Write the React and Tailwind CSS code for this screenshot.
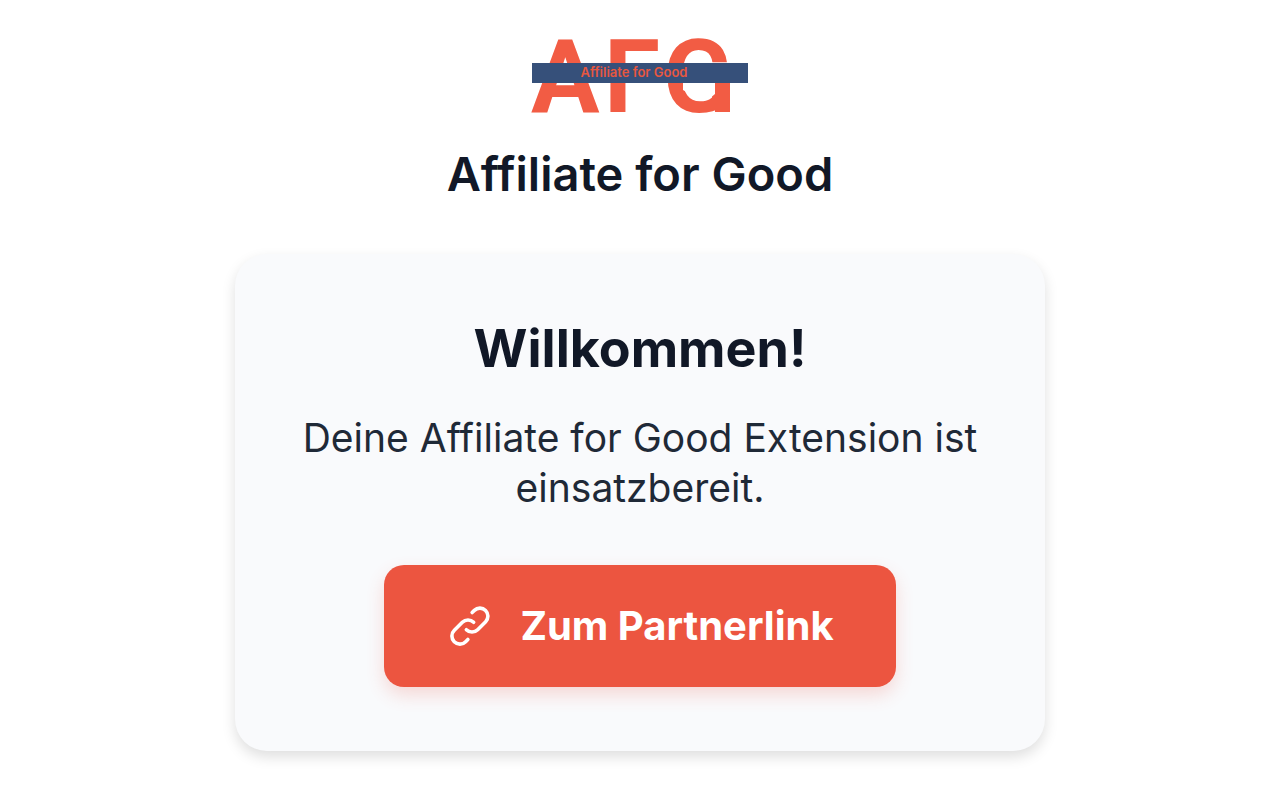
import React from "react";

function Logo() {
  return (
    <svg viewBox="0 0 218 104" className="h-[104px] w-[218px] overflow-visible" role="img" aria-label="AFG">
      <g fill="#f25c44" fontFamily="Roboto, sans-serif" fontWeight="700" fontSize="102">
        <text x="0 73 132" y="76">AFG</text>
      </g>
      <path d="M152 44H184V58L178 63H168L152 54Z" fill="#ffffff" />
      <rect x="184" y="46" width="15" height="30" fill="#f25c44" />
      <rect x="1" y="27" width="216" height="20" fill="#36507a" />
      <text x="103" y="41" fontSize="13" textAnchor="middle" fill="#e8573f" fontFamily="Inter, sans-serif" fontWeight="600">
        Affiliate for Good
      </text>
    </svg>
  );
}

function LinkIcon() {
  return (
    <svg viewBox="0 0 24 24" className="size-12" fill="none" stroke="currentColor" strokeWidth="1.8" strokeLinecap="round" strokeLinejoin="round" aria-hidden="true">
      <path d="M13.828 10.172a4 4 0 0 0-5.656 0l-4 4a4 4 0 1 0 5.656 5.656l1.102-1.101m-.758-4.899a4 4 0 0 0 5.656 0l4-4a4 4 0 0 0-5.656-5.656l-1.1 1.1" />
    </svg>
  );
}

export default function App() {
  return (
    <div className="flex min-h-screen flex-col items-center bg-white px-6 pt-9 pb-12 font-['Inter',sans-serif] text-[#111827]">
      <header className="flex flex-col items-center gap-2">
        <Logo />
        <h1 className="text-[47px] leading-[52px] font-semibold">Affiliate for Good</h1>
      </header>
      <main className="mt-[54px] flex w-full max-w-[810px] flex-col items-center rounded-[32px] bg-[#f9fafc] px-12 pt-[63px] pb-16 text-center shadow-[0_6px_14px_rgba(0,0,0,0.13)]">
        <h2 className="text-[52px] leading-[64px] font-bold">Willkommen!</h2>
        <p className="mt-8 text-[39px] leading-[50px] text-[#1f2937]">
          Deine Affiliate for Good Extension ist einsatzbereit.
        </p>
        <button type="button" className="mt-[52px] flex items-center gap-[26px] rounded-[20px] bg-[#ec5540] px-[62px] py-9 text-[40px] leading-[50px] font-bold text-white shadow-[0_8px_18px_rgba(236,83,63,0.2)]">
          <LinkIcon />
          Zum Partnerlink
        </button>
      </main>
    </div>
  );
}
